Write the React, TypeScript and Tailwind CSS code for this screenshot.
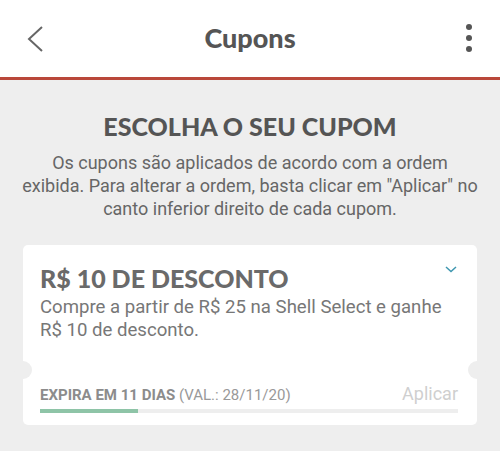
import React from 'react';

const Header = () => (
  <div className="bg-white h-[80px] border-b-[3px] border-[#b9473a] flex items-center justify-between px-[24px] relative">
    <svg width="20" height="28" viewBox="0 0 20 28" className="ml-[1px]">
      <path d="M17 2 L4 14 L17 26" fill="none" stroke="#666" strokeWidth="2" />
    </svg>
    <h1 className="absolute left-0 right-0 text-center text-[27px] font-black text-[#555] font-['Lato',sans-serif] pointer-events-none">
      Cupons
    </h1>
    <div className="flex flex-col gap-[5px] mr-[4px] -mt-[2px]">
      <span className="w-[6px] h-[6px] rounded-full bg-[#555]" />
      <span className="w-[6px] h-[6px] rounded-full bg-[#555]" />
      <span className="w-[6px] h-[6px] rounded-full bg-[#555]" />
    </div>
  </div>
);

const CouponCard = () => (
  <div className="relative bg-white rounded-[5px] mx-[23px] pl-[17px] pr-[19px] pt-[18px] pb-[12px]">
    {/* notches */}
    <span className="absolute left-[-9px] top-[116px] w-[18px] h-[18px] rounded-full bg-[#eeeeee]" />
    <span className="absolute right-[-9px] top-[116px] w-[18px] h-[18px] rounded-full bg-[#eeeeee]" />
    <svg width="14" height="10" viewBox="0 0 14 10" className="absolute right-[19px] top-[19px]">
      <path d="M2 3 L7 7.5 L12 3" fill="none" stroke="#3f97b0" strokeWidth="1.5" />
    </svg>
    <div className="font-['Lato',sans-serif] font-black text-[25px] leading-[30px] text-[#6a6a6a]">
      R$ 10 DE DESCONTO
    </div>
    <p className="font-['Roboto',sans-serif] text-[18.6px] leading-[23px] text-[#777] mt-[3px]">
      Compre a partir de R$ 25 na Shell Select e ganhe R$ 10 de desconto.
    </p>
    <div className="flex items-end justify-between mt-[42px] font-['Roboto',sans-serif]">
      <div className="text-[15px] leading-[18px] text-[#999]">
        <span className="font-bold text-[#8c8c8c]">EXPIRA EM 11 DIAS</span> (VAL.: 28/11/20)
      </div>
      <div className="text-[18px] leading-[20px] text-[#cfcfcf]">Aplicar</div>
    </div>
    <div className="mt-[5px] h-[4px] bg-[#eeeeee] flex">
      <div className="w-[98px] bg-[#8ec4a7]" />
    </div>
  </div>
);

export default function App() {
  return (
    <div className="w-[500px] h-[451px] bg-[#eeeeee] overflow-hidden">
      <Header />
      <div className="pt-[30px] text-center">
        <h2 className="font-['Lato',sans-serif] font-black text-[25px] leading-[32px] text-[#555]">
          ESCOLHA O SEU CUPOM
        </h2>
        <p className="font-['Roboto',sans-serif] text-[18px] leading-[23px] text-[#666] mt-[9px] px-[21px]">
          Os cupons são aplicados de acordo com a ordem exibida. Para alterar a ordem, basta clicar em "Aplicar" no canto inferior direito de cada cupom.
        </p>
      </div>
      <div className="mt-[25px]">
        <CouponCard />
      </div>
    </div>
  );
}
